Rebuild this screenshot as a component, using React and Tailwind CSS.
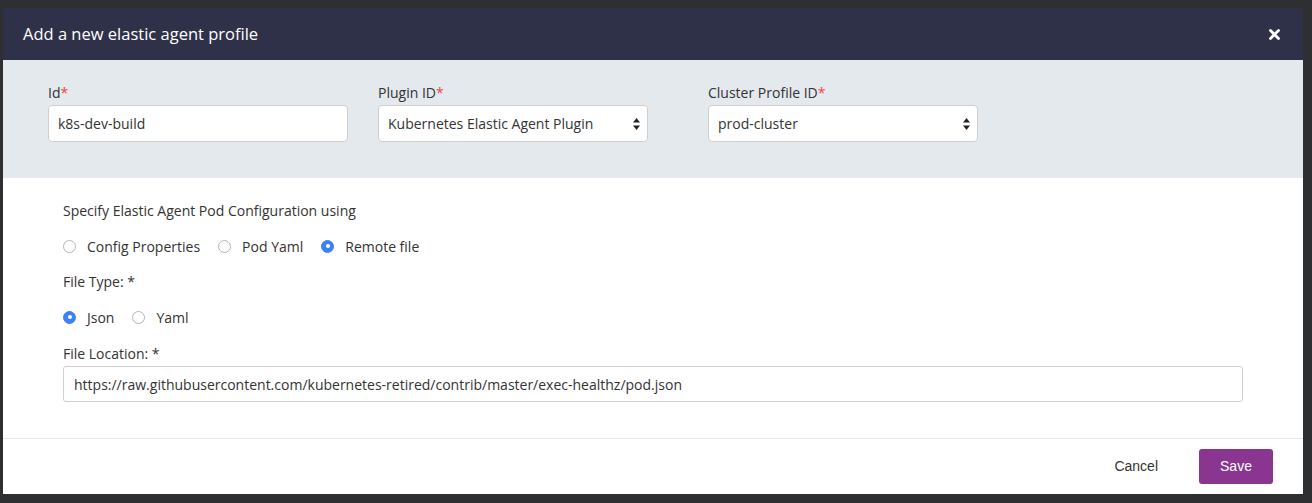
import { useState } from "react";

const font = { fontFamily: '"Open Sans", "Liberation Sans", sans-serif' };

function Radio({ label, checked, onClick }) {
  return (
    <label onClick={onClick} className="flex items-center cursor-pointer mr-[18px]">
      <span
        className={`w-[13px] h-[13px] rounded-full flex items-center justify-center mr-[11px] ${
          checked ? "bg-[#3b82f6] border border-[#3b82f6]" : "bg-white border border-[#b5b5b5]"
        }`}
      >
        {checked && <span className="w-[4px] h-[4px] rounded-full bg-white" />}
      </span>
      <span className="text-[14px] text-[#333]">{label}</span>
    </label>
  );
}

function Arrows() {
  return (
    <svg width="7" height="12" viewBox="0 0 7 12" className="absolute right-[7px] top-[12px]">
      <path d="M3.5 0 L7 4.5 L0 4.5 Z" fill="#222" />
      <path d="M3.5 12 L7 7.5 L0 7.5 Z" fill="#222" />
    </svg>
  );
}

function Field({ label, children, width }) {
  return (
    <div className={`flex flex-col ${width}`}>
      <div className="text-[14px] text-[#333] h-[20px] leading-[20px] mb-[2px]">
        {label}
        <span className="text-[#f0453f]">*</span>
      </div>
      {children}
    </div>
  );
}

export default function App() {
  const [mode, setMode] = useState("remote");
  const [fileType, setFileType] = useState("json");

  return (
    <div className="w-[1312px] h-[503px] bg-[#2e2f31] pt-[8px] pl-[3px]" style={font}>
      <div className="w-[1300px] h-[486px] bg-white flex flex-col">
        <div className="h-[52px] bg-[#2f3148] flex items-center justify-between pl-[20px] pr-[23px]">
          <span className="text-white text-[16.5px]">Add a new elastic agent profile</span>
          <svg width="11" height="11" viewBox="0 0 11 11">
            <path d="M1.5 1.5 L9.5 9.5 M9.5 1.5 L1.5 9.5" stroke="white" strokeWidth="2.8" strokeLinecap="round" />
          </svg>
        </div>

        <div className="h-[118px] bg-[#e3e9ed] pl-[45px] pt-[23px] flex">
          <div className="w-[330px]">
            <Field label="Id" width="w-[300px]">
              <input
                defaultValue="k8s-dev-build"
                className="h-[37px] w-[300px] bg-white border border-[#cfcfcf] rounded-[4px] px-[9px] text-[14px] text-[#333] outline-none"
                style={font}
              />
            </Field>
          </div>
          <div className="w-[330px]">
            <Field label="Plugin ID" width="w-[270px]">
              <div className="relative h-[37px] w-[270px] bg-white border border-[#cfcfcf] rounded-[4px] flex items-center px-[9px] text-[14px] text-[#333]">
                Kubernetes Elastic Agent Plugin
                <Arrows />
              </div>
            </Field>
          </div>
          <div className="w-[330px]">
            <Field label="Cluster Profile ID" width="w-[270px]">
              <div className="relative h-[37px] w-[270px] bg-white border border-[#cfcfcf] rounded-[4px] flex items-center px-[9px] text-[14px] text-[#333]">
                prod-cluster
                <Arrows />
              </div>
            </Field>
          </div>
        </div>

        <div className="h-[260px] px-[60px] pt-[23px] flex flex-col">
          <div className="text-[14px] text-[#333] h-[20px] leading-[20px]">
            Specify Elastic Agent Pod Configuration using
          </div>
          <div className="flex h-[20px] mt-[15px]">
            <Radio label="Config Properties" checked={mode === "config"} onClick={() => setMode("config")} />
            <Radio label="Pod Yaml" checked={mode === "yaml"} onClick={() => setMode("yaml")} />
            <Radio label="Remote file" checked={mode === "remote"} onClick={() => setMode("remote")} />
          </div>
          <div className="text-[14px] text-[#333] h-[20px] leading-[20px] mt-[16px]">File Type: *</div>
          <div className="flex h-[20px] mt-[15px]">
            <Radio label="Json" checked={fileType === "json"} onClick={() => setFileType("json")} />
            <Radio label="Yaml" checked={fileType === "yaml"} onClick={() => setFileType("yaml")} />
          </div>
          <div className="text-[14px] text-[#333] h-[20px] leading-[20px] mt-[17px]">File Location: *</div>
          <input
            defaultValue="https://raw.githubusercontent.com/kubernetes-retired/contrib/master/exec-healthz/pod.json"
            className="mt-[2px] h-[36px] w-full bg-white border border-[#cfcfcf] rounded-[3px] px-[10px] text-[14px] text-[#333] outline-none"
            style={font}
          />
        </div>

        <div className="flex-1 border-t border-[#e6e6e6] flex items-center justify-end pr-[30px]">
          <button
            className="text-[14px] text-[#333] mr-[41px]"
            style={{ fontFamily: '"Liberation Sans", Arial, sans-serif' }}
          >
            Cancel
          </button>
          <button
            className="h-[35px] w-[74px] bg-[#8a3590] text-white rounded-[3px] text-[14px]"
            style={{ fontFamily: '"Liberation Sans", Arial, sans-serif' }}
          >
            Save
          </button>
        </div>
      </div>
    </div>
  );
}
